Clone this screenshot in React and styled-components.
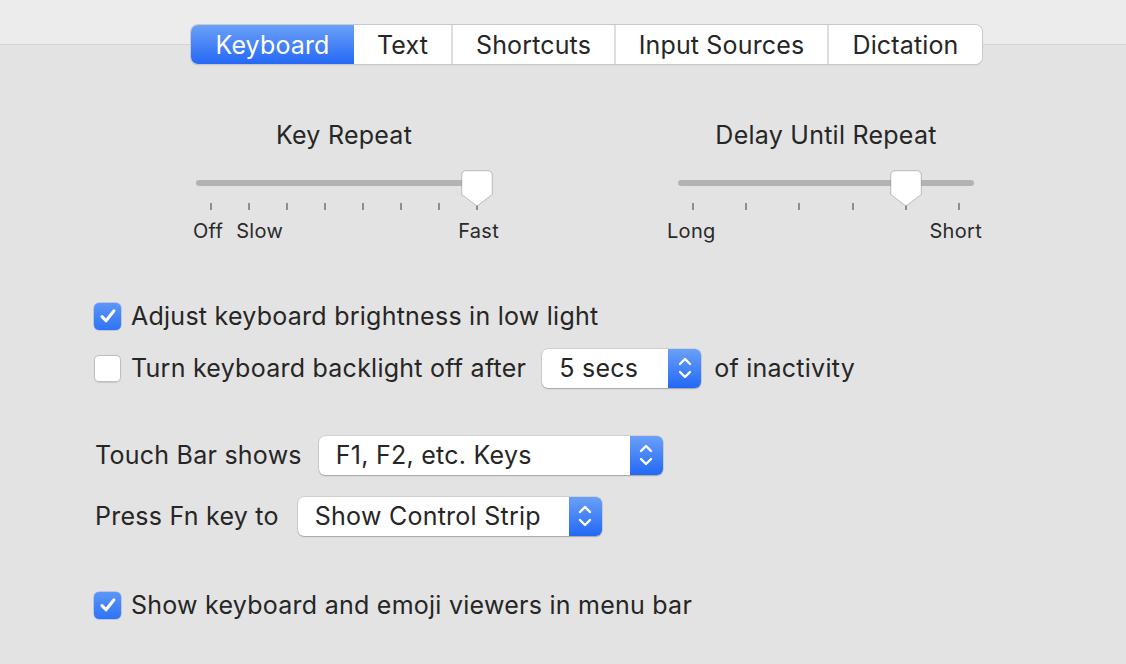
import React from "react";
import styled, { createGlobalStyle } from "styled-components";

const Global = createGlobalStyle`
  html, body { margin: 0; padding: 0; }
  body {
    width: 1126px; height: 664px; overflow: hidden;
    background: #e3e3e3;
    font-family: Inter, "Noto Sans", "Liberation Sans", sans-serif;
    color: #262626;
    -webkit-font-smoothing: antialiased;
  }
`;

const Page = styled.div`
  width: 1126px;
  height: 664px;
  background: #e3e3e3;
  display: flex;
  flex-direction: column;
`;

const Header = styled.div`
  height: 45px;
  box-sizing: border-box;
  background: #ececec;
  border-bottom: 1px solid #d4d4d4;
  padding: 25px 0 0 191px;
  display: flex;
  align-items: flex-start;
`;

const TabBar = styled.div`
  position: relative;
  z-index: 1;
  display: flex;
  height: 39px;
  box-sizing: border-box;
  border-radius: 7px;
  background: #fff;
  box-shadow: 0 0 0 1px #c9c9c9, 0 1px 1.5px rgba(0,0,0,0.22);
  overflow: hidden;
`;

const Tab = styled.div`
  width: ${p => p.$w}px;
  display: flex;
  align-items: center;
  justify-content: center;
  font-size: 25px;
  letter-spacing: 0.15px;
  box-sizing: border-box;
  color: ${p => (p.$active ? "#fff" : "#262626")};
  background: ${p => (p.$active ? "linear-gradient(#6ba0f8, #2468f6)" : "#fff")};
  border-left: ${p => (p.$first || p.$active || p.$afterActive ? "none" : "2px solid #dedede")};
`;

const Content = styled.div`
  display: flex;
  flex-direction: column;
`;

const SliderSection = styled.div`
  display: flex;
  gap: 186px;
  padding: 74px 0 0 196px;
`;

const SliderBlock = styled.div`
  width: 296px;
  display: flex;
  flex-direction: column;
`;

const SliderTitle = styled.div`
  text-align: center;
  font-size: 25px;
  letter-spacing: 0.25px;
  line-height: 32px;
  margin-bottom: 19px;
  white-space: nowrap;
`;

const SliderBody = styled.div`
  position: relative;
  height: 42px;
`;

const Track = styled.div`
  margin-top: 10px;
  height: 6px;
  border-radius: 3px;
  background: #b3b3b3;
`;

const Ticks = styled.div`
  display: flex;
  justify-content: space-between;
  padding: 0 14px 0 14px;
  margin-top: 17px;
`;

const Tick = styled.div`
  width: 2px;
  height: 7px;
  background: #8e8e8e;
`;

const Thumb = styled.svg`
  position: absolute;
  top: 0;
  width: 32px;
  height: 37px;
  overflow: visible;
`;

const Labels = styled.div`
  display: flex;
  align-items: center;
  margin: 5px ${p => p.$mr}px 0 ${p => p.$ml}px;
  font-size: 20px;
  letter-spacing: 0.3px;
  line-height: 28px;
  color: #2a2a2a;
  gap: 13px;
`;

const Spacer = styled.div`
  flex: 1;
`;

const Row = styled.div`
  display: flex;
  align-items: center;
  height: 40px;
  padding-left: ${p => p.$pl ?? 94}px;
  margin-top: ${p => p.$mt}px;
  font-size: 25px;
  letter-spacing: 0.25px;
`;

const Box = styled.div`
  width: 27px;
  height: 27px;
  box-sizing: border-box;
  border-radius: 5px;
  margin-right: 10px;
  display: flex;
  align-items: center;
  justify-content: center;
  background: ${p => (p.$checked ? "linear-gradient(#5b96f8, #2f73f6)" : "#fff")};
  box-shadow: ${p =>
    p.$checked
      ? "0 0 0 0.5px rgba(0,60,200,0.35)"
      : "inset 0 0 0 1px #bdbdbd, 0 0.5px 1px rgba(0,0,0,0.12)"};
`;

const Label = styled.span`
  margin-right: ${p => p.$mr ?? 0}px;
  white-space: nowrap;
`;

const Popup = styled.div`
  width: ${p => p.$w}px;
  height: 39px;
  box-sizing: border-box;
  display: flex;
  border-radius: 6px;
  background: #fff;
  box-shadow: 0 0 0 0.5px rgba(0,0,0,0.15), 0 1px 1.5px rgba(0,0,0,0.22);
  overflow: hidden;
  margin-right: ${p => p.$mr ?? 0}px;
`;

const PopupText = styled.div`
  flex: 1;
  display: flex;
  align-items: center;
  padding-left: 17px;
  font-size: 25px;
  white-space: nowrap;
`;

const PopupArrows = styled.div`
  width: 33px;
  display: flex;
  align-items: center;
  justify-content: center;
  background: linear-gradient(#6aa0f8, #2268f6);
`;

const Check = () => (
  <svg width="18" height="16" viewBox="0 0 18 16">
    <path d="M3 8.6 L7 12.8 L15 2.8" fill="none" stroke="#fff" strokeWidth="3" strokeLinecap="round" strokeLinejoin="round" />
  </svg>
);

const Arrows = () => (
  <svg width="16" height="26" viewBox="0 0 16 26">
    <path d="M3 9 L8 4 L13 9" fill="none" stroke="#fff" strokeWidth="2.4" strokeLinecap="round" strokeLinejoin="round" />
    <path d="M3 17 L8 22 L13 17" fill="none" stroke="#fff" strokeWidth="2.4" strokeLinecap="round" strokeLinejoin="round" />
  </svg>
);

const Slider = ({ title, ticks, value, labels }) => {
  const inset = 15;
  const span = 296 - inset * 2;
  const center = inset + (span * value) / (ticks - 1);
  return (
    <SliderBlock>
      <SliderTitle>{title}</SliderTitle>
      <SliderBody>
        <Track />
        <Ticks>
          {Array.from({ length: ticks }).map((_, i) => (
            <Tick key={i} />
          ))}
        </Ticks>
        <Thumb style={{ left: center - 16 }} viewBox="0 0 32 37">
          <path
            d="M5 0.75 H27 A4.25 4.25 0 0 1 31.25 5 V24.5 L16 36 L0.75 24.5 V5 A4.25 4.25 0 0 1 5 0.75 Z"
            fill="#fff"
            stroke="rgba(0,0,0,0.22)"
            strokeWidth="1"
          />
        </Thumb>
      </SliderBody>
      {labels}
    </SliderBlock>
  );
};

const tabs = [
  { t: "Keyboard", w: 163 },
  { t: "Text", w: 97 },
  { t: "Shortcuts", w: 163 },
  { t: "Input Sources", w: 213 },
  { t: "Dictation", w: 155 },
];

export default function App() {
  return (
    <Page>
      <Global />
      <Header>
        <TabBar>
          {tabs.map((tab, i) => (
            <Tab key={tab.t} $w={tab.w} $active={i === 0} $first={i === 0} $afterActive={i === 1}>
              {tab.t}
            </Tab>
          ))}
        </TabBar>
      </Header>
      <Content>
        <SliderSection>
          <Slider
            title="Key Repeat"
            ticks={8}
            value={7}
            labels={
              <Labels $ml={-3} $mr={-7}>
                <span>Off</span>
                <span>Slow</span>
                <Spacer />
                <span>Fast</span>
              </Labels>
            }
          />
          <Slider
            title="Delay Until Repeat"
            ticks={6}
            value={4}
            labels={
              <Labels $ml={-11} $mr={-8}>
                <span>Long</span>
                <Spacer />
                <span>Short</span>
              </Labels>
            }
          />
        </SliderSection>

        <Row $mt={51}>
          <Box $checked><Check /></Box>
          <Label>Adjust keyboard brightness in low light</Label>
        </Row>
        <Row $mt={12}>
          <Box />
          <Label $mr={16}>Turn keyboard backlight off after</Label>
          <Popup $w={159} $mr={13}>
            <PopupText>5 secs</PopupText>
            <PopupArrows><Arrows /></PopupArrows>
          </Popup>
          <Label>of inactivity</Label>
        </Row>

        <Row $mt={47} $pl={95}>
          <Label $mr={17}>Touch Bar shows</Label>
          <Popup $w={344}>
            <PopupText>F1, F2, etc. Keys</PopupText>
            <PopupArrows><Arrows /></PopupArrows>
          </Popup>
        </Row>
        <Row $mt={21} $pl={95}>
          <Label $mr={19}>Press Fn key to</Label>
          <Popup $w={304}>
            <PopupText>Show Control Strip</PopupText>
            <PopupArrows><Arrows /></PopupArrows>
          </Popup>
        </Row>

        <Row $mt={49}>
          <Box $checked><Check /></Box>
          <Label>Show keyboard and emoji viewers in menu bar</Label>
        </Row>
      </Content>
    </Page>
  );
}
